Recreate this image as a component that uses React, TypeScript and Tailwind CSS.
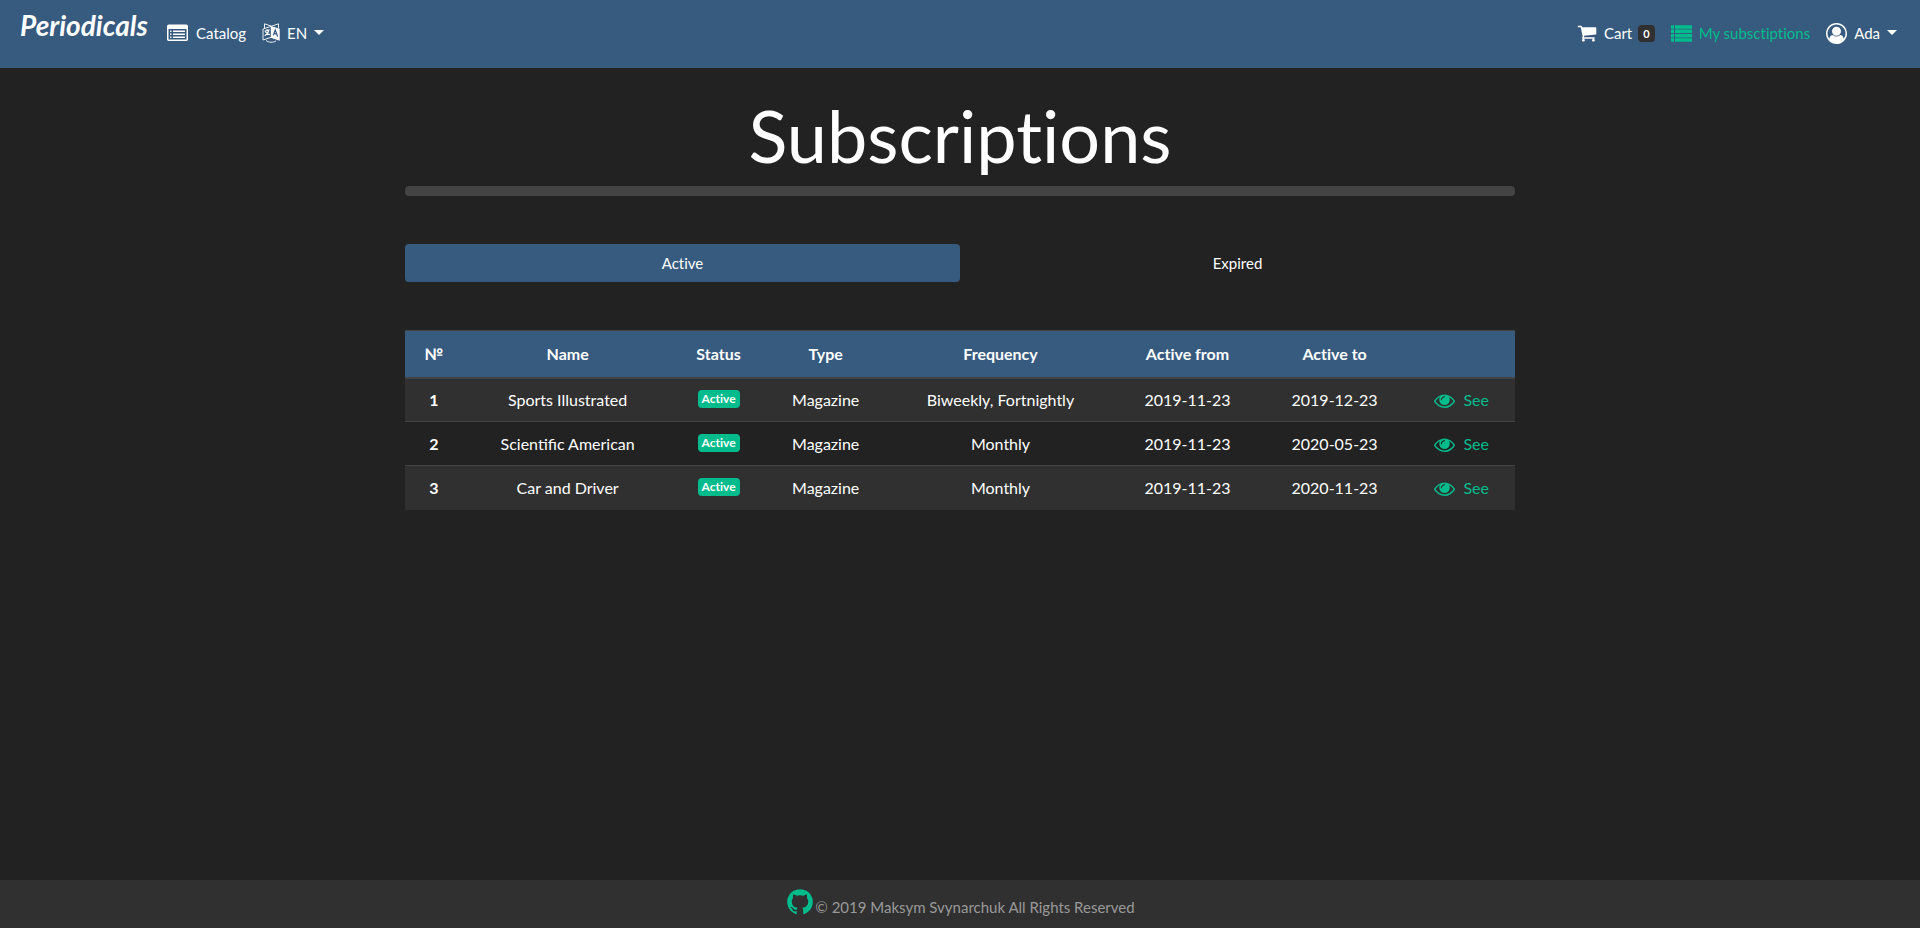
import React from "react";

const paths = {
  listAlt:
    "M384 1184v64q0 13-9.500 22.500t-22.500 9.500h-64q-13 0-22.500-9.500t-9.500-22.500v-64q0-13 9.500-22.500t22.500-9.500h64q13 0 22.500 9.500t9.500 22.500zm0-256v64q0 13-9.500 22.500t-22.500 9.500h-64q-13 0-22.500-9.500t-9.500-22.500v-64q0-13 9.500-22.500t22.500-9.500h64q13 0 22.500 9.500t9.500 22.500zm0-256v64q0 13-9.500 22.500t-22.500 9.500h-64q-13 0-22.500-9.500t-9.500-22.500v-64q0-13 9.500-22.500t22.500-9.500h64q13 0 22.500 9.500t9.500 22.500zm1152 512v64q0 13-9.500 22.500t-22.500 9.500h-960q-13 0-22.500-9.500t-9.500-22.500v-64q0-13 9.500-22.500t22.500-9.500h960q13 0 22.500 9.500t9.500 22.500zm0-256v64q0 13-9.500 22.500t-22.500 9.500h-960q-13 0-22.500-9.500t-9.500-22.500v-64q0-13 9.500-22.500t22.500-9.500h960q13 0 22.500 9.500t9.500 22.500zm0-256v64q0 13-9.500 22.500t-22.500 9.500h-960q-13 0-22.500-9.500t-9.500-22.500v-64q0-13 9.500-22.500t22.500-9.500h960q13 0 22.500 9.500t9.500 22.500zm128 704v-832q0-13-9.500-22.500t-22.500-9.500h-1472q-13 0-22.500 9.500t-9.500 22.500v832q0 13 9.500 22.500t22.500 9.500h1472q13 0 22.500-9.500t9.500-22.500zm128-1088v1088q0 66-47 113t-113 47h-1472q-66 0-113-47t-47-113v-1088q0-66 47-113t113-47h1472q66 0 113 47t47 113z",
  eye: "M1664 960q-152-236-381-353 61 104 61 225 0 185-131.500 316.500t-316.500 131.500-316.500-131.500-131.500-316.500q0-121 61-225-229 117-381 353 133 205 333.500 326.500t434.500 121.500 434.500-121.500 333.500-326.500zm-720-384q0-20-14-34t-34-14q-125 0-214.500 89.500t-89.500 214.500q0 20 14 34t34 14 34-14 14-34q0-86 61-147t147-61q20 0 34-14t14-34zm848 384q0 34-20 69-140 230-376.500 368.500t-499.500 138.500-499.500-139-376.500-368q-20-35-20-69t20-69q140-229 376.500-368t499.500-139 499.500 139 376.500 368q20 35 20 69z",
  cart: "M704 1536q0 52-38 90t-90 38-90-38-38-90 38-90 90-38 90 38 38 90zm896 0q0 52-38 90t-90 38-90-38-38-90 38-90 90-38 90 38 38 90zm128-1088v512q0 24-16.500 42.500t-40.500 21.500l-1044 122q13 60 13 70 0 16-24 64h920q26 0 45 19t19 45-19 45-45 19h-1024q-26 0-45-19t-19-45q0-11 8-31.500t16-36 21.500-40 15.500-29.500l-177-823h-204q-26 0-45-19t-19-45 19-45 45-19h256q16 0 28.500 6.500t19.500 15.500 13 24.500 8 26 5.500 29.500 4.500 26h1201q26 0 45 19t19 45z",
  list: "M0 192h256v290h-256zM342 192h1450v290h-1450zM0 565h256v290h-256zM342 565h1450v290h-1450zM0 938h256v290h-256zM342 938h1450v290h-1450zM0 1311h256v290h-256zM342 1311h1450v290h-1450z",
  user: "M896 0q182 0 348 71t286 191 191 286 71 348q0 181-70.500 347t-190.500 286-286 191.500-349 71.500-349-71-285.500-191.500-190.500-286-71-347.500 71-348 191-286 286-191 348-71zm619 1351q149-205 149-455 0-156-61-298t-164-245-245-164-298-61-298 61-245 164-164 245-61 298q0 250 149 455 66-327 306-327 131 128 313 128t313-128q240 0 306 327zm-235-647q0-159-112.500-271.500t-271.500-112.500-271.500 112.500-112.500 271.500 112.500 271.500 271.500 112.500 271.500-112.500 112.500-271.500z",
  github:
    "M896 128q209 0 385.500 103t279.500 279.500 103 385.500q0 251-146.500 451.500t-378.500 277.500q-27 5-40-7t-13-30q0-3 .5-76.500t.5-134.500q0-97-52-142 57-6 102.500-18t94-39 81-66.500 53-105 20.500-150.500q0-119-79-206 37-91-8-204-28-9-81 11t-92 44l-38 24q-93-26-192-26t-192 26q-16-11-42.500-27t-83.500-38.500-85-13.500q-45 113-8 204-79 87-79 206 0 85 20.500 150t52.500 105 80.500 67 94 39 102.500 18q-39 36-49 103-21 10-45 15t-57 5-65.500-21.500-55.500-62.500q-19-32-48.500-52t-49.500-24l-20-3q-21 0-29 4.500t-5 11.500 9 14 13 12l7 5q22 10 43.500 38t31.500 51l10 23q13 38 44 61.500t67 30 69.500 7 55.500-3.500l23-4q0 38 .5 88.500t.5 54.500q0 18-13 30t-40 7q-232-77-378.500-277.500t-146.500-451.500q0-209 103-385.500t279.500-279.500 385.500-103z",
};

function Icon({ name, className }: { name: keyof typeof paths; className: string }) {
  return (
    <svg viewBox="0 0 1792 1792" fill="currentColor" aria-hidden="true" className={className}>
      <path d={paths[name]} />
    </svg>
  );
}

function LanguageIcon() {
  return (
    <svg viewBox="0 0 18 20" aria-hidden="true" className="h-5 w-[18px] shrink-0" fill="none" stroke="currentColor">
      <path d="M9.500 3.200 1 6v11l8.500-2.800M2.500 5.400V.8l7 2.400L16.500.8v4.600" strokeWidth=".9" />
      <path d="M8.800 3 17.700 5.700v12L8.800 14.800z" fill="currentColor" stroke="none" />
      <path d="M2.600 8.300l5-1.600M5 6.200v1.300M6.700 7c-.4 2.800-2 4.600-4 5.700M3.400 8.700c1 1.600 2.500 2.700 4.500 2.900" strokeWidth="1.200" />
      <path d="m11.300 12.200 2-5.200 2.300 6.500M12 10.400l2.900.9" stroke="#375a7f" strokeWidth="1.200" />
      <path d="M4 17.500c3 2.200 7 2.300 10 .4" strokeWidth=".9" />
    </svg>
  );
}

function Caret() {
  return <span className="mb-0.5 ml-[7px] border-x-[5px] border-t-[5px] border-x-transparent border-t-white" />;
}

const rows = [
  { name: "Sports Illustrated", frequency: "Biweekly, Fortnightly", from: "2019-11-23", to: "2019-12-23" },
  { name: "Scientific American", frequency: "Monthly", from: "2019-11-23", to: "2020-05-23" },
  { name: "Car and Driver", frequency: "Monthly", from: "2019-11-23", to: "2020-11-23" },
];

export default function App() {
  return (
    <div className="flex min-h-screen flex-col bg-[#222] font-['Lato',sans-serif] text-[15px] leading-6 text-white [font-variant-ligatures:none]">
      <nav className="flex items-start bg-[#375a7f] px-5 pb-[23px] pt-[7px]">
        <a href="#home" className="mr-5 w-[127px] whitespace-nowrap text-[28px] font-bold italic leading-9">
          Periodicals
        </a>
        <div className="flex grow items-center pt-3.5">
          <a href="#catalog" className="flex items-center">
            <Icon name="listAlt" className="mr-2 size-[21px] shrink-0" />
            Catalog
          </a>
          <button type="button" className="ml-4 flex items-center">
            <LanguageIcon />
            <span className="ml-[7px]">EN</span>
            <Caret />
          </button>
          <a href="#cart" className="ml-auto flex items-center">
            <Icon name="cart" className="mr-[7px] size-5 shrink-0" />
            Cart
            <span className="ml-1.5 mr-px rounded bg-[#303030] px-[5px] text-[11px] font-bold leading-[17px]">0</span>
          </a>
          <a href="#subscriptions" className="ml-[15px] flex items-center text-[#00bc8c]">
            <Icon name="list" className="mr-[7px] size-[21px] shrink-0" />
            My subsctiptions
          </a>
          <button type="button" className="ml-4 mr-[3px] flex items-center">
            <Icon name="user" className="mr-[7px] size-[21px] shrink-0" />
            Ada
            <Caret />
          </button>
        </div>
      </nav>

      <main className="mx-auto w-full max-w-[1110px] grow pt-6">
        <h1 className="text-center text-[72px] leading-[86px]">Subscriptions</h1>
        <div className="mt-2 h-2.5 rounded bg-[#444]" />
        <div role="tablist" className="mt-12 grid grid-cols-2">
          <button type="button" role="tab" aria-selected="true" className="rounded bg-[#375a7f] py-[7px]">
            Active
          </button>
          <button type="button" role="tab" aria-selected="false" className="rounded py-[7px]">
            Expired
          </button>
        </div>
        <table className="mt-12 w-full table-fixed border-collapse text-center text-base">
          <colgroup>
            <col className="w-[5.2%]" />
            <col className="w-[18.9%]" />
            <col className="w-[8.3%]" />
            <col className="w-[11%]" />
            <col className="w-[20.5%]" />
            <col className="w-[13.2%]" />
            <col className="w-[13.3%]" />
            <col />
          </colgroup>
          <thead>
            <tr className="h-[47px] border-b-2 border-t border-[#444] bg-[#375a7f]">
              <th scope="col">№</th>
              <th scope="col">Name</th>
              <th scope="col">Status</th>
              <th scope="col">Type</th>
              <th scope="col">Frequency</th>
              <th scope="col">Active from</th>
              <th scope="col">Active to</th>
              <td />
            </tr>
          </thead>
          <tbody>
            {rows.map((row, i) => (
              <tr key={row.name} className="h-11 border-t border-[#444] odd:bg-[#303030]">
                <th scope="row">{i + 1}</th>
                <td className="[font-variant-ligatures:normal]">{row.name}</td>
                <td>
                  <span className="mb-1 inline-block rounded bg-[#00bc8c] px-1 align-middle text-xs font-bold leading-[18px]">
                    Active
                  </span>
                </td>
                <td>Magazine</td>
                <td>{row.frequency}</td>
                <td>{row.from}</td>
                <td>{row.to}</td>
                <td>
                  <a href="#see" className="flex items-center justify-center text-[#00bc8c]">
                    <Icon name="eye" className="mr-2 mt-0.5 size-[21px] shrink-0" />
                    See
                  </a>
                </td>
              </tr>
            ))}
          </tbody>
        </table>
      </main>

      <footer className="flex h-12 items-center justify-center bg-[#303030] text-[#999]">
        <a href="#github" aria-label="GitHub" className="mb-1 text-[#00bc8c]">
          <Icon name="github" className="size-[30px]" />
        </a>
        <span className="pt-1.5">© 2019 Maksym Svynarchuk All Rights Reserved</span>
      </footer>
    </div>
  );
}
